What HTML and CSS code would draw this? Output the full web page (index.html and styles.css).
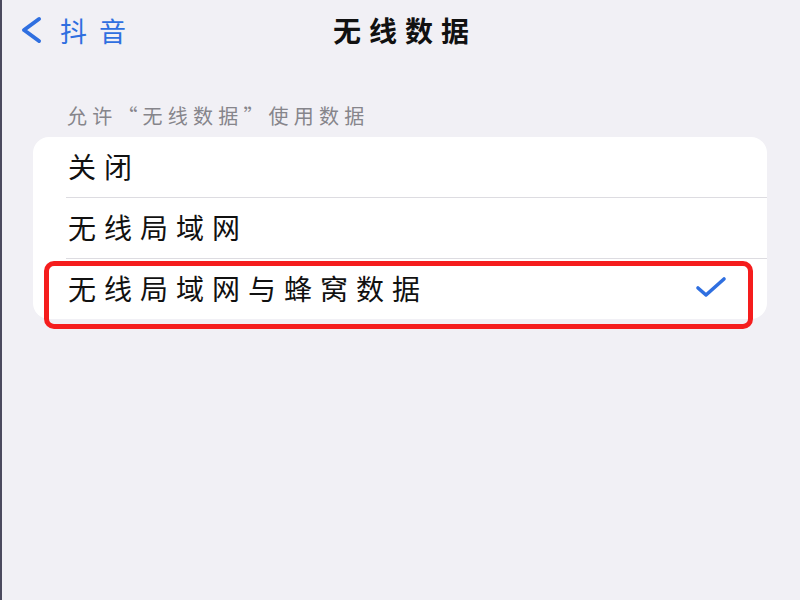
FILE: index.html
```html
<!DOCTYPE html>
<html lang="zh-CN">
<head>
    <meta charset="UTF-8">
    <meta name="viewport" content="width=device-width, initial-scale=1.0">
    <title>无线数据</title>
    <link rel="stylesheet" href="styles.css">
</head>
<body>
    <div class="screen">
        <div class="nav-bar">
            <a class="back" href="#">
                <svg class="back-icon" width="26" height="30" viewBox="0 0 26 30">
                    <polyline points="21,4 6,15 21,26" fill="none" stroke="#2f6fe0" stroke-width="4" stroke-linecap="round" stroke-linejoin="round"/>
                </svg>
                <span class="back-label">抖音</span>
            </a>
            <h1 class="nav-title">无线数据</h1>
        </div>

        <div class="section-label">允许“无线数据”使用数据</div>

        <div class="card">
            <div class="row">
                <div class="row-inner">关闭</div>
            </div>
            <div class="row">
                <div class="row-inner">无线局域网</div>
            </div>
            <div class="row">
                <div class="row-inner last">
                    <span>无线局域网与蜂窝数据</span>
                    <svg class="check" width="32" height="24" viewBox="0 0 32 24">
                        <polyline points="3,12 11,19 29,3" fill="none" stroke="#2f6fe0" stroke-width="3.6" stroke-linecap="round" stroke-linejoin="round"/>
                    </svg>
                </div>
            </div>
            <div class="highlight"></div>
        </div>
    </div>
</body>
</html>
```

FILE: styles.css
```css
body {
    margin: 0;
    padding: 0;
    background-color: #f1f0f5;
    font-family: "Noto Sans CJK SC", "Noto Sans", sans-serif;
}

.screen {
    height: 600px;
    border-left: 2px solid #4b4a5e;
    background-color: #f1f0f5;
}

.nav-bar {
    position: relative;
    height: 64px;
    display: flex;
    align-items: center;
    justify-content: center;
}

.back {
    position: absolute;
    left: 16px;
    top: 0;
    height: 64px;
    display: flex;
    align-items: center;
    gap: 16px;
    text-decoration: none;
    color: #2f6fe0;
}

.back-icon {
    margin-top: -4px;
}

.back-label {
    font-size: 27px;
    letter-spacing: 12px;
    margin-top: -4px;
}

.nav-title {
    margin: -4px 0 0 8px;
    font-size: 28px;
    font-weight: bold;
    letter-spacing: 8px;
    color: #111;
}

.section-label {
    padding: 39px 0 8px 65px;
    height: 26px;
    line-height: 26px;
    font-size: 20px;
    letter-spacing: 5.2px;
    color: #86858b;
}

.card {
    position: relative;
    margin: 0 33px 0 31px;
    background-color: #fff;
    border-radius: 16px;
}

.row {
    padding-left: 33px;
}

.row-inner {
    height: 57px;
    padding-bottom: 3px;
    display: flex;
    align-items: center;
    justify-content: space-between;
    border-bottom: 1px solid #dddce1;
    padding-left: 2px;
    padding-right: 40px;
    font-size: 28px;
    letter-spacing: 8px;
    color: #111;
}

.row-inner.last {
    border-bottom: none;
}

.check {
    margin-top: 1px;
}

.highlight {
    position: absolute;
    left: 11px;
    top: 124px;
    width: 709px;
    height: 68px;
    box-sizing: border-box;
    border: 5px solid #f51d1d;
    border-radius: 10px;
}
```
